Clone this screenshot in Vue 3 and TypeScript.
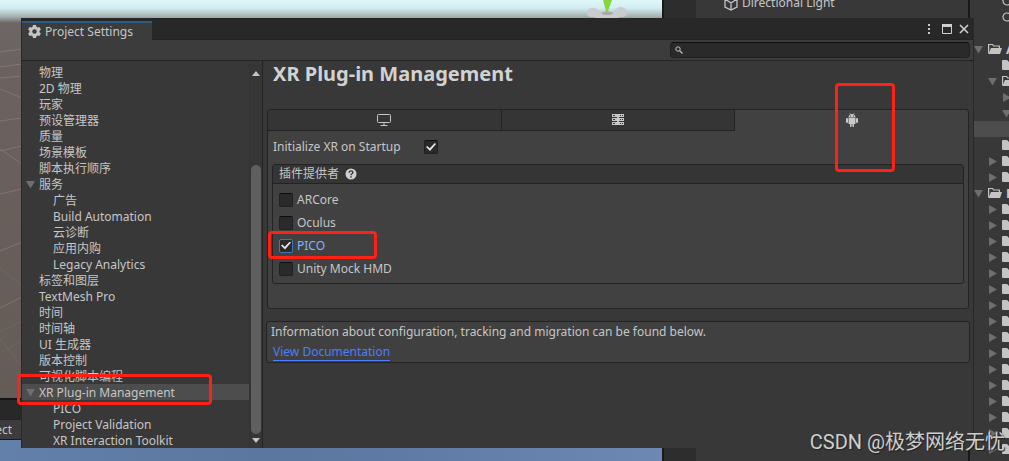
<script setup lang="ts">
import { ref } from 'vue'

interface SettingsEntry {
  label: string
  child?: boolean
  open?: boolean
}

interface Provider {
  id: string
  label: string
  enabled: boolean
  marked?: boolean
}

interface AssetRow {
  level: number
  arrow?: 'down' | 'right'
  icon?: 'search' | 'folder' | 'page'
  label?: string
  active?: boolean
}

const entries: SettingsEntry[] = [
  { label: '物理' },
  { label: '2D 物理' },
  { label: '玩家' },
  { label: '预设管理器' },
  { label: '质量' },
  { label: '场景模板' },
  { label: '脚本执行顺序' },
  { label: '服务', open: true },
  { label: '广告', child: true },
  { label: 'Build Automation', child: true },
  { label: '云诊断', child: true },
  { label: '应用内购', child: true },
  { label: 'Legacy Analytics', child: true },
  { label: '标签和图层' },
  { label: 'TextMesh Pro' },
  { label: '时间' },
  { label: '时间轴' },
  { label: 'UI 生成器' },
  { label: '版本控制' },
  { label: '可视化脚本编程' },
  { label: 'XR Plug-in Management', open: true },
  { label: 'PICO', child: true },
  { label: 'Project Validation', child: true },
  { label: 'XR Interaction Toolkit', child: true },
]

const selected = ref('XR Plug-in Management')
const query = ref('')
const initOnStartup = ref(true)
const platform = ref('android')

const providers = ref<Provider[]>([
  { id: 'arcore', label: 'ARCore', enabled: false },
  { id: 'oculus', label: 'Oculus', enabled: false },
  { id: 'pico', label: 'PICO', enabled: true, marked: true },
  { id: 'mock', label: 'Unity Mock HMD', enabled: false },
])

const packageRows: AssetRow[] = Array.from({ length: 16 }, () => ({
  level: 1,
  arrow: 'right',
  icon: 'page',
}))

const assets: AssetRow[] = [
  { level: 1, icon: 'search' },
  { level: 1, icon: 'search' },
  { level: 0 },
  { level: 0, arrow: 'down', icon: 'folder', label: 'Assets' },
  { level: 1, icon: 'page' },
  { level: 1, arrow: 'down', icon: 'folder' },
  { level: 2, arrow: 'right' },
  { level: 2, arrow: 'down' },
  { level: 2, active: true },
  { level: 1, icon: 'page' },
  { level: 1, arrow: 'right', icon: 'page' },
  { level: 1, arrow: 'right', icon: 'page' },
  { level: 0, arrow: 'down', icon: 'folder', label: 'Packages' },
  ...packageRows,
]
</script>

<template>
  <div class="editor">
    <div class="backdrop">
      <div class="left-dock">
        <div class="scene">
          <svg class="grid-lines" width="22" height="380" viewBox="0 0 22 380" fill="none" stroke="#8b8582" stroke-width="1" opacity=".6">
            <path d="M0 34l22-3M0 49l22-3M0 60l22-2M0 71L22 80M0 103l22-3M0 133l22-5M0 131L22 146M0 176l22-5M0 233l22-9M0 290l22-11" />
            <path d="M0 250L22 268M0 314l22-11M0 335l22-13M0 321L22 348" opacity=".4" />
          </svg>
          <svg class="gizmo" width="42" height="20" viewBox="0 0 42 20">
            <path d="M1 13c0-4 4-6 8-5 3 1 4 3 7 4h10c3-1 4-4 8-5 4 0 7 2 7 6 0 3-3 4-5 4-4 0-6 1-8 3H13c-2-2-4-3-7-3-3 0-5-1-5-4z" fill="#c9cdcd" />
            <path d="M15 13l6-2 7 2-4 2h-6z" fill="#a5aaaa" />
            <path d="M17 0h9l-4 11h-2z" fill="#86d63f" />
          </svg>
        </div>
        <div class="dock-tabs">
          <div class="dock-strip"></div>
          <div class="dock-row"><span class="dock-tab">Project</span></div>
        </div>
        <div class="game-view"></div>
      </div>
      <div class="hierarchy">
        <div class="hierarchy-item">
          <svg width="14" height="16" viewBox="0 0 14 16" fill="none" stroke="#c4c4c4" stroke-width="1.3">
            <path d="M7 1l6 3v8l-6 3-6-3V4zM1 4l6 4 6-4M7 8v7" />
          </svg>
          <span>Directional Light</span>
        </div>
      </div>
      <div class="assets">
        <div
          v-for="(row, i) in assets"
          :key="i"
          class="asset-row"
          :class="['level-' + row.level, { active: row.active }]"
        >
          <span class="arrow-slot">
            <svg v-if="row.arrow === 'down'" width="9" height="9" viewBox="0 0 9 9"><path d="M0 1h9L4.500 8.500z" fill="#6e6e6e" /></svg>
            <svg v-if="row.arrow === 'right'" width="9" height="9" viewBox="0 0 9 9"><path d="M1 0l8 4.500L1 9z" fill="#6e6e6e" /></svg>
          </span>
          <svg v-if="row.icon === 'search'" class="asset-icon" width="14" height="12" viewBox="0 0 14 12" fill="none" stroke="#c4c4c4" stroke-width="1.200"><circle cx="5" cy="6" r="4" /><path d="M8 9l3 3" /></svg>
          <svg v-if="row.icon === 'folder'" class="asset-icon" width="14" height="12" viewBox="0 0 14 12">
            <path d="M.6 10.500V1.500h4l1 1.500h5.800v2" fill="none" stroke="#c4c4c4" stroke-width="1.200" />
            <path d="M3 5h11l-2 6H0.500z" fill="#c4c4c4" />
          </svg>
          <svg v-if="row.icon === 'page'" class="asset-icon" width="14" height="12" viewBox="0 0 14 12"><path d="M0 2q0-1 1-1h4l3 3h4v7H1q-1 0-1-1z" fill="#c4c4c4" /></svg>
          <b v-if="row.label">{{ row.label }}</b>
        </div>
      </div>
    </div>

    <section class="window">
      <header class="titlebar">
        <div class="title-tab">
          <svg width="13" height="13" viewBox="0 0 13 13">
            <path fill="#c4c4c4" fill-rule="evenodd" d="M5 0h3l.4 1.800 1.200.7 1.800-.6 1.500 2.600-1.400 1.300v1.400l1.400 1.300-1.500 2.600-1.800-.6-1.200.7L8 13H5l-.4-1.800-1.200-.7-1.800.6L.1 8.500l1.400-1.300V5.800L.1 4.500l1.500-2.600 1.800.6 1.200-.7zM6.500 4.200a2.300 2.300 0 1 0 0 4.600 2.300 2.300 0 0 0 0-4.600z" />
          </svg>
          <span>Project Settings</span>
        </div>
        <div class="window-controls">
          <button type="button" aria-label="Menu">
            <svg width="4" height="12" viewBox="0 0 4 12" fill="#c8c8c8"><path d="M1 1h2v2H1zM1 5h2v2H1zM1 9h2v2H1z" /></svg>
          </button>
          <button type="button" class="maximize" aria-label="Maximize">
            <svg width="10" height="10" viewBox="0 0 10 10"><path d="M.5.500h9v9h-9z" fill="none" stroke="#d0d0d0" /><path d="M0 0h10v3H0z" fill="#d0d0d0" /></svg>
          </button>
          <button type="button" aria-label="Close">
            <svg width="10" height="10" viewBox="0 0 10 10"><path d="M1 1l8 8M9 1L1 9" stroke="#d0d0d0" stroke-width="1.600" /></svg>
          </button>
        </div>
      </header>

      <div class="toolbar">
        <label class="search">
          <svg width="8" height="8" viewBox="0 0 8 8" fill="none" stroke="#c4c4c4"><circle cx="3" cy="3" r="2.200" /><path d="M4.600 4.600L7.500 7.500" stroke-width="1.300" /></svg>
          <input v-model="query" type="text" aria-label="Search settings" />
        </label>
      </div>

      <div class="body">
        <nav class="sidebar">
          <ul class="entries">
            <li
              v-for="entry in entries"
              :key="entry.label + (entry.child ? '-child' : '')"
              class="entry"
              :class="{ child: entry.child, selected: entry.label === selected }"
            >
              <span class="fold">
                <svg v-if="entry.open" width="9" height="9" viewBox="0 0 9 9"><path d="M0 1h9L4.500 8.500z" fill="#6e6e6e" /></svg>
              </span>
              <button type="button" @click="selected = entry.label">{{ entry.label }}</button>
              <i v-if="entry.label === 'XR Plug-in Management'" class="mark mark-entry"></i>
            </li>
          </ul>
          <div class="scrollbar">
            <svg width="8" height="5" viewBox="0 0 8 5"><path d="M4 0l4 5H0z" fill="#c4c4c4" /></svg>
            <div class="track"><div class="thumb"></div></div>
            <svg width="8" height="5" viewBox="0 0 8 5"><path d="M0 0h8L4 5z" fill="#c4c4c4" /></svg>
          </div>
        </nav>

        <main class="content">
          <h1>XR Plug-in Management</h1>
          <div class="platforms">
            <div class="tabs" role="tablist">
              <button type="button" role="tab" aria-label="Desktop" :aria-selected="platform === 'desktop'" :class="{ current: platform === 'desktop' }" @click="platform = 'desktop'">
                <svg width="14" height="12" viewBox="0 0 14 12" fill="none" stroke="#c8c8c8"><rect x=".5" y=".5" width="13" height="8" rx="1" /><path d="M7 9v2M3.500 11.500h7" /></svg>
              </button>
              <button type="button" role="tab" aria-label="Dedicated server" :aria-selected="platform === 'server'" :class="{ current: platform === 'server' }" @click="platform = 'server'">
                <svg width="12" height="12" viewBox="0 0 12 12">
                  <path d="M0 0h12v3H0zM0 4h12v3H0zM0 8h12v3H0zM5 3h2v1H5zM5 7h2v1H5z" fill="#c8c8c8" />
                  <path d="M1 1.500h2M8 1.500h1M10 1.500h1M1 5.500h2M8 5.500h1M10 5.500h1M1 9.500h2M8 9.500h1M10 9.500h1" stroke="#353535" />
                </svg>
              </button>
              <button type="button" role="tab" aria-label="Android" :aria-selected="platform === 'android'" :class="{ current: platform === 'android' }" @click="platform = 'android'">
                <svg width="12" height="14" viewBox="0 0 12 14" fill="#c8c8c8">
                  <path d="M2.500 4.500c0-1.600.8-2.600 1.700-3.100L3.500.300l.4-.2.800 1.100a4 4 0 0 1 2.600 0L8.100.100l.4.2-.7 1.100c.9.5 1.700 1.500 1.700 3.100z" />
                  <path d="M2.500 5h7v5.500q0 .5-.5.500H8v2.200q0 .8-.8.800t-.8-.8V11h-.8v2.200q0 .8-.8.800T4 13.200V11H3q-.5 0-.5-.5z" />
                  <rect y="5" width="2" height="5" rx="1" /><rect x="10" y="5" width="2" height="5" rx="1" />
                  <path d="M4 2.500h1v1H4zM7 2.500h1v1H7z" fill="#414141" />
                </svg>
                <i class="mark mark-tab"></i>
              </button>
            </div>

            <div class="panel">
              <div class="startup">
                <label for="init-xr">Initialize XR on Startup</label>
                <input id="init-xr" v-model="initOnStartup" type="checkbox" />
              </div>
              <div class="group">
                <div class="group-head">
                  <span>插件提供者</span>
                  <svg width="12" height="12" viewBox="0 0 12 12"><circle cx="6" cy="6" r="5.500" fill="#d0d0d0" /><path d="M4.200 4.700c0-2.500 3.700-2.300 3.700-.2C7.900 5.800 6 5.800 6 7.300M6 8.300v1.400" fill="none" stroke="#353535" stroke-width="1.400" /></svg>
                </div>
                <div class="providers">
                  <div v-for="p in providers" :key="p.id" class="provider" :class="{ focused: p.marked }">
                    <input :id="p.id" v-model="p.enabled" type="checkbox" />
                    <label :for="p.id">{{ p.label }}</label>
                    <i v-if="p.marked" class="mark mark-provider"></i>
                  </div>
                </div>
              </div>
            </div>
          </div>

          <div class="info">
            <p>Information about configuration, tracking and migration can be found below.</p>
            <a href="#docs">View Documentation</a>
          </div>
        </main>
      </div>
    </section>

    <div class="watermark">CSDN @极梦网络无忧</div>
  </div>
</template>

<style>
body {
  margin: 0;
  background: #383838;
}
</style>

<style scoped>
.editor {
  position: relative;
  box-sizing: border-box;
  min-height: 100vh;
  padding: 18px 35px 13px 21px;
  overflow: hidden;
  font: 12px/16px "Noto Sans", "Noto Sans CJK SC", sans-serif;
  color: #c6c6c6;
}
.editor *,
.editor *::before {
  box-sizing: border-box;
}
svg {
  display: block;
  flex: none;
}
button {
  border: 0;
  margin: 0;
  padding: 0;
  background: none;
  color: inherit;
  font: inherit;
}

/* Docked panels behind the floating window */
.backdrop {
  position: absolute;
  inset: 0;
  display: flex;
}
.left-dock {
  flex: 1;
  display: flex;
  flex-direction: column;
}
.scene {
  flex: 1;
  position: relative;
  background: linear-gradient(#dff7f9 0, #d2eef1 8px, #a2adae 17px, #6c6664 23px, #6b615f 90px, #645c57 100%);
}
.grid-lines {
  position: absolute;
  left: 0;
  top: 18px;
}
.gizmo {
  position: absolute;
  right: 34px;
  top: 0;
}
.dock-tabs {
  border-top: 2px solid #141414;
  border-bottom: 1px solid #191919;
}
.dock-strip {
  height: 19px;
  background: #282828;
}
.dock-row {
  height: 20px;
  display: flex;
  align-items: center;
  border-top: 1px solid #232323;
  background: #3c3c3c;
}
.dock-tab {
  width: 12px;
  display: flex;
  justify-content: flex-end;
  overflow: hidden;
}
.game-view {
  height: 21px;
  background: linear-gradient(90deg, #6380ab, #5b779f 40%, #5f7ba5 60%, #6d88b3);
}
.hierarchy {
  width: 308px;
  border-left: 2px solid #191919;
  border-right: 2px solid #191919;
  background: linear-gradient(90deg, #2d2d2d 32px, #383838 32px);
}
.hierarchy-item {
  display: flex;
  align-items: center;
  gap: 4px;
  height: 16px;
  margin-top: -5px;
  padding-left: 60px;
}
.assets {
  width: 39px;
  overflow: hidden;
  background: #383838;
  padding-left: 4px;
}
.asset-row {
  display: flex;
  align-items: center;
  gap: 4px;
  height: 16px;
}
.asset-row:first-child {
  margin-top: -7px;
}
.asset-row.active {
  background: #4d4d4d;
}
.level-1 {
  padding-left: 14px;
}
.level-2 {
  padding-left: 28px;
}
.arrow-slot {
  flex: none;
  width: 10px;
}
.asset-row b {
  font-size: 13px;
}

/* Floating settings window */
.window {
  position: relative;
  border-left: 1px solid #282828;
  border-right: 1px solid #282828;
  background: #383838;
}
.titlebar {
  display: flex;
  justify-content: space-between;
  height: 22px;
  border-bottom: 1px solid #232323;
  background: #282828;
}
.title-tab {
  display: flex;
  align-items: center;
  gap: 4px;
  height: 19px;
  margin-top: 3px;
  padding: 0 19px 0 6px;
  border-top: 2px solid #2c5d87;
  background: #3c3c3c;
}
.window-controls {
  display: flex;
  align-items: center;
  gap: 7px;
  padding-right: 4px;
}
.window-controls .maximize {
  margin-left: 4px;
}
.toolbar {
  display: flex;
  justify-content: flex-end;
  align-items: center;
  height: 21px;
  padding-right: 3px;
  border-bottom: 1px solid #232323;
  background: #3c3c3c;
}
.search {
  display: flex;
  align-items: center;
  gap: 4px;
  width: 300px;
  height: 16px;
  padding: 0 4px;
  border: 1px solid #212121;
  border-top-color: #0d0d0d;
  border-radius: 4px;
  background: #2a2a2a;
}
.search input {
  flex: 1;
  min-width: 0;
  height: 12px;
  padding: 0;
  border: 0;
  outline: 0;
  background: none;
  color: inherit;
  font: inherit;
}
.body {
  display: flex;
}
.sidebar {
  flex: none;
  display: flex;
  width: 241px;
  border-right: 1px solid #232323;
}
.entries {
  flex: 1;
  margin: 0;
  padding: 3px 0 0;
  list-style: none;
}
.entry {
  position: relative;
  display: flex;
  align-items: center;
  height: 16px;
  padding-left: 4px;
  white-space: nowrap;
}
.entry.child {
  padding-left: 18px;
}
.entry.selected {
  background: #4d4d4d;
}
.entry button {
  padding-top: 2px;
}
.fold {
  width: 13px;
}
.scrollbar {
  display: flex;
  flex-direction: column;
  align-items: center;
  gap: 4px;
  width: 13px;
  margin-top: 3px;
  padding: 7px 0 5px;
  border-left: 1px solid #323232;
  background: #363636;
}
.track {
  flex: 1;
  display: flex;
  flex-direction: column;
  justify-content: flex-end;
}
.thumb {
  width: 10px;
  height: 76%;
  border-radius: 5px;
  background: #5f5f5f;
}
.content {
  flex: 1;
  min-width: 0;
  padding: 0 3px 0 3px;
}
h1 {
  margin: 0;
  padding: 1px 7px 23px;
  font-size: 20px;
  line-height: 24px;
  font-weight: 700;
  color: #d2d2d2;
}
.platforms {
  margin: 0 1px 12px;
  border: 1px solid #232323;
  border-radius: 3px;
  background: #414141;
}
.tabs {
  display: flex;
}
.tabs button {
  position: relative;
  flex: 1;
  display: flex;
  justify-content: center;
  align-items: center;
  height: 21px;
  border-right: 1px solid #232323;
  border-bottom: 1px solid #232323;
  background: #353535;
}
.tabs button:last-child {
  border-right: 0;
}
.tabs button.current {
  border-bottom-color: transparent;
  background: none;
}
.panel {
  padding: 8px 4px 24px;
}
.startup {
  display: flex;
  align-items: center;
  height: 16px;
  padding-left: 1px;
}
.startup label {
  width: 151px;
}
input[type="checkbox"] {
  appearance: none;
  flex: none;
  display: flex;
  justify-content: center;
  align-items: center;
  width: 14px;
  height: 14px;
  margin: 0;
  border: 1px solid #212121;
  border-top-color: #0d0d0d;
  border-radius: 2px;
  background: #2a2a2a;
}
input[type="checkbox"]:checked::before {
  content: "";
  width: 10px;
  height: 8px;
  background: #e6e6e6;
  clip-path: polygon(0 50%, 12% 36%, 38% 66%, 88% 0, 100% 12%, 40% 100%);
}
.group {
  margin-top: 9px;
  border: 1px solid #232323;
  border-radius: 3px;
}
.group-head {
  display: flex;
  align-items: center;
  gap: 6px;
  height: 19px;
  padding-left: 6px;
  border-bottom: 1px solid #232323;
  background: #353535;
}
.providers {
  padding: 4px 6px 3px;
}
.provider {
  position: relative;
  display: flex;
  align-items: center;
  gap: 4px;
  height: 23px;
}
.provider.focused {
  color: #81b4ff;
}
.provider.focused input {
  border-color: #3a79bb;
}
.info {
  padding: 2px 4px 1px;
  border: 1px solid #232323;
  border-radius: 3px;
  background: #404040;
}
.info p {
  margin: 0 0 4px;
}
.info a {
  display: block;
  width: fit-content;
  margin: 0 2px;
  border-bottom: 1px solid #4c7eff;
  color: #4c7eff;
  text-decoration: none;
}

/* Red callouts */
.mark {
  position: absolute;
  z-index: 1;
  border: 3px solid #ff2115;
  border-radius: 4px;
  pointer-events: none;
}
.mark-entry {
  left: -5px;
  top: -10px;
  width: 195px;
  height: 31px;
}
.mark-provider {
  left: -11px;
  top: -3px;
  width: 109px;
  height: 28px;
}
.mark-tab {
  left: 100px;
  top: -27px;
  width: 60px;
  height: 89px;
}
.watermark {
  position: absolute;
  right: 4px;
  bottom: 5px;
  font: 20px/28px Roboto, "Noto Sans CJK SC", sans-serif;
  color: #cfcfcf;
  text-shadow: 1px 1px 1px #222222;
}
</style>
